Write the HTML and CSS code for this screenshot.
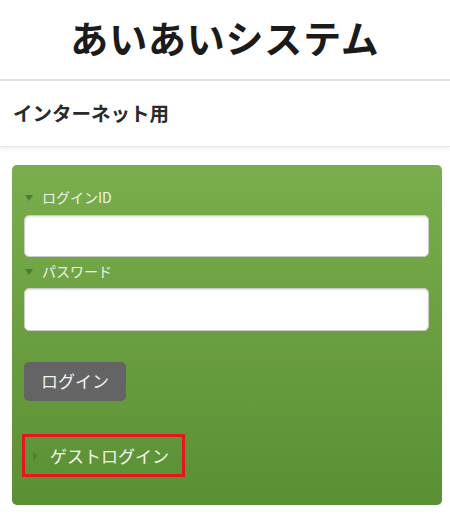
FILE: index.html
```html
<!DOCTYPE html>
<html lang="ja">
<head>
<meta charset="utf-8">
<title>あいあいシステム</title>
<link rel="stylesheet" href="styles.css">
</head>
<body>
<header class="site-header">
  <h1 class="site-title">あいあいシステム</h1>
</header>
<div class="sub-header">インターネット用</div>
<form class="login-panel">
  <div class="field-label"><span class="tri-down"></span>ログインID</div>
  <input class="text-input first" type="text">
  <div class="field-label second"><span class="tri-down"></span>パスワード</div>
  <input class="text-input pass" type="password">
  <button class="login-btn" type="button">ログイン</button>
  <div class="guest-box"><span class="tri-right"></span><span class="guest-text">ゲストログイン</span></div>
</form>
</body>
</html>
```

FILE: styles.css
```css
* { box-sizing: border-box; }
html, body { margin: 0; padding: 0; background: #ffffff; }
body {
  font-family: "Noto Sans CJK JP", "Noto Sans", sans-serif;
  color: #1f1f1f;
  width: 450px;
}
.site-header {
  height: 81px;
  border-bottom: 2px solid #dfe4e4;
  display: flex;
  align-items: center;
  justify-content: center;
  padding-bottom: 6px;
}
.site-title {
  margin: 0;
  font-size: 38px;
  font-weight: 700;
  letter-spacing: 0.8px;
  line-height: 1;
  color: #1b1b1b;
}
.sub-header {
  height: 66px;
  display: flex;
  align-items: center;
  padding-left: 13px;
  padding-bottom: 2px;
  font-size: 19.5px;
  font-weight: 700;
  color: #2a2a2a;
  border-bottom: 1px solid #e4e7e7;
  box-shadow: 0 3px 4px rgba(0, 0, 0, 0.05);
}
.login-panel {
  margin: 18px 8px 0 12px;
  height: 340px;
  padding: 22px 13px 0 12px;
  border-radius: 5px;
  background: linear-gradient(#7aae4c, #5a8f34);
  display: flex;
  flex-direction: column;
  align-items: flex-start;
}
.field-label {
  height: 20px;
  display: flex;
  align-items: center;
  font-size: 14px;
  color: #eef3ea;
  line-height: 1;
}
.field-label.second { margin-top: 4px; }
.tri-down {
  width: 0;
  height: 0;
  margin: 1px 9px 0 1px;
  border-left: 4.5px solid transparent;
  border-right: 4.5px solid transparent;
  border-top: 6px solid #4d7b37;
}
.text-input {
  width: 405px;
  height: 42px;
  margin-top: 8px;
  border: 1px solid #c9cdc6;
  border-radius: 5px;
  background: #ffffff;
  box-shadow: inset 0 1px 2px rgba(0, 0, 0, 0.12);
  font: inherit;
  padding: 0 8px;
}
.text-input.pass { margin-top: 7px; height: 43px; }
.login-btn {
  margin-top: 31px;
  width: 102px;
  height: 39px;
  border: none;
  border-radius: 5px;
  background: #646464;
  color: #f2f2f2;
  font-family: "Noto Sans CJK JP", "Noto Sans", sans-serif;
  font-size: 17px;
  font-weight: 400;
  text-align: left;
  padding: 0 0 2px 17px;
  line-height: 1;
}
.guest-box {
  margin-top: 33px;
  margin-left: -2px;
  width: 163px;
  height: 43px;
  border: 3px solid #e5161e;
  display: flex;
  align-items: center;
  padding-left: 8px;
}
.tri-right {
  width: 0;
  height: 0;
  border-top: 4.5px solid transparent;
  border-bottom: 4.5px solid transparent;
  border-left: 5px solid #4f7e37;
  margin-right: 12px;
}
.guest-text {
  font-size: 17px;
  font-weight: 400;
  color: #f4f7f1;
  line-height: 1;
  padding-bottom: 1px;
}
```
